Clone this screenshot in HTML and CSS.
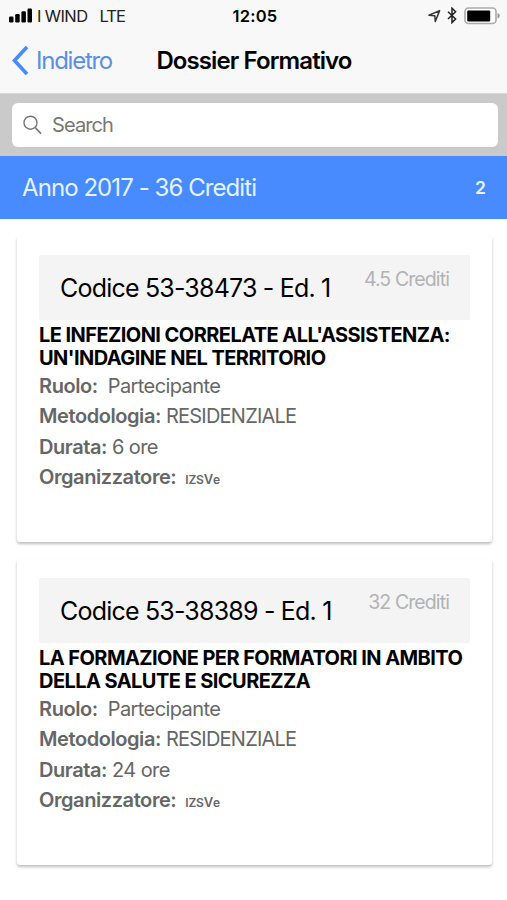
FILE: index.html
```html
<!DOCTYPE html>
<html lang="it">
<head>
  <meta charset="UTF-8" />
  <meta name="viewport" content="width=device-width, initial-scale=1" />
  <title>Dossier Formativo</title>
  <link rel="stylesheet" href="styles.css">
</head>
<body>

<header>
  <div class="status-bar">
    <div class="carrier">
      <svg class="signal" width="23" height="15" viewBox="0 0 23 15">
        <rect x="0" y="8.5" width="4.5" height="6" rx="1.2"/>
        <rect x="6.2" y="6" width="4.5" height="8.5" rx="1.2"/>
        <rect x="12.4" y="3.2" width="4.5" height="11.3" rx="1.2"/>
        <rect x="18.5" y="0.5" width="4.5" height="14" rx="1.2"/>
      </svg>
      <span class="operator">I WIND</span>
      <span class="network">LTE</span>
    </div>
    <span class="clock">12:05</span>
    <div class="indicators">
      <svg width="13" height="14" viewBox="0 0 13 14">
        <path d="M1 6.3L11.6 1.6L7.3 12.5L6.8 6.8Z" fill="none" stroke="#333" stroke-width="1.5" stroke-linejoin="round"/>
      </svg>
      <svg class="bluetooth" width="10" height="17" viewBox="0 0 10 17">
        <path d="M1 4.8L8.6 12L5 15.6V1.2L8.6 4.8L1 12" fill="none" stroke="#222" stroke-width="1.5"/>
      </svg>
      <svg class="battery" width="37" height="18" viewBox="0 0 37 18">
        <rect x="1" y="1" width="31" height="15.5" rx="3.5" fill="#fff" stroke="#aaa" stroke-width="1.6"/>
        <rect x="3.2" y="3.4" width="23" height="11" rx="1" fill="#000"/>
        <path d="M33.5 6V11.5Q35.8 10.7 35.8 8.7T33.5 6Z" fill="#999"/>
      </svg>
    </div>
  </div>
  <nav>
    <a href="#" class="back">
      <svg width="17" height="31" viewBox="0 0 17 31">
        <path d="M15 2L2.5 15.5L15 29" fill="none" stroke="#488aff" stroke-width="3.6"/>
      </svg>
      <span>Indietro</span>
    </a>
    <h1>Dossier Formativo</h1>
  </nav>
</header>

<div class="search">
  <div class="search-box">
    <svg width="19" height="20" viewBox="0 0 19 20">
      <circle cx="7.5" cy="7.7" r="6.5" fill="none" stroke="#777" stroke-width="1.4"/>
      <path d="M12.2 12.5L18 18.6" stroke="#777" stroke-width="1.7"/>
    </svg>
    <span>Search</span>
  </div>
</div>

<div class="year">
  <span class="year-label">Anno 2017 - 36 Crediti</span>
  <span class="year-count">2</span>
</div>

<main>
  <div class="card">
    <div class="card-head">
      <h2>Codice 53-38473 - Ed. 1</h2>
      <span class="credits">4.5 Crediti</span>
    </div>
    <h3>LE INFEZIONI CORRELATE ALL'ASSISTENZA:<br>UN'INDAGINE NEL TERRITORIO</h3>
    <p><strong>Ruolo:</strong>&nbsp; Partecipante</p>
    <p><strong>Metodologia:</strong> <span class="upper">RESIDENZIALE</span></p>
    <p><strong>Durata:</strong> 6 ore</p>
    <p><strong>Organizzatore:</strong> <span class="organizer"><small>IZS</small>V<small>e</small></span></p>
  </div>

  <div class="card">
    <div class="card-head">
      <h2>Codice 53-38389 - Ed. 1</h2>
      <span class="credits">32 Crediti</span>
    </div>
    <h3>LA FORMAZIONE PER FORMATORI IN AMBITO<br>DELLA SALUTE E SICUREZZA</h3>
    <p><strong>Ruolo:</strong>&nbsp; Partecipante</p>
    <p><strong>Metodologia:</strong> <span class="upper">RESIDENZIALE</span></p>
    <p><strong>Durata:</strong> 24 ore</p>
    <p><strong>Organizzatore:</strong> <span class="organizer"><small>IZS</small>V<small>e</small></span></p>
  </div>
</main>

</body>
</html>
```
FILE: styles.css
```css
* {
  box-sizing: border-box;
}

body {
  margin: 0;
  font-family: Inter, Roboto, sans-serif;
  background: #fff;
  color: #000;
}

svg {
  display: block;
  flex: none;
}

header {
  height: 94px;
  background: #f8f8f8;
  border-bottom: 1px solid #d8d8d8;
}

.status-bar {
  display: grid;
  grid-template-columns: 1fr auto 1fr;
  align-items: center;
  height: 31px;
  padding: 0 6px 0 9px;
}

.carrier {
  display: flex;
  align-items: center;
  font-size: 16.5px;
  letter-spacing: -0.6px;
  color: #222;
}

.operator {
  margin-left: 5px;
}

.network {
  margin-left: 12px;
  letter-spacing: -1px;
}

.clock {
  font-size: 16.5px;
  font-weight: 600;
  letter-spacing: 0.2px;
}

.indicators {
  display: flex;
  align-items: center;
  justify-content: flex-end;
}

.bluetooth {
  margin: 0 7px 0 6px;
}

nav {
  display: grid;
  grid-template-columns: 1fr auto 1fr;
  align-items: center;
  height: 58px;
  padding: 0 11px 0 12px;
}

.back {
  display: flex;
  align-items: center;
  gap: 7px;
  color: #5b8fe0;
  font-size: 24px;
  letter-spacing: -1.25px;
  text-decoration: none;
}

h1 {
  margin: 0;
  font-size: 24px;
  font-weight: 600;
  letter-spacing: -0.9px;
}

.search {
  height: 62px;
  padding: 9px 9px 0 12px;
  background: #cacaca;
}

.search-box {
  display: flex;
  align-items: center;
  gap: 10px;
  height: 44px;
  padding-left: 11px;
  border-radius: 6px;
  background: #fff;
  color: #777;
  font-size: 20px;
  letter-spacing: -0.9px;
}

.year {
  display: flex;
  align-items: center;
  justify-content: space-between;
  height: 63px;
  padding: 0 21px 0 22px;
  background: #488aff;
  color: #e2f4ff;
}

.year-label {
  font-size: 24px;
  letter-spacing: -0.93px;
}

.year-count {
  font-size: 17.5px;
  font-weight: 600;
}

main {
  padding: 17px 15px 0 17px;
}

.card {
  height: 306px;
  margin-bottom: 17px;
  padding: 19px 22px 0;
  border-radius: 3px;
  background: #fff;
  box-shadow: 0 2px 3px rgba(0, 0, 0, 0.26);
}

.card-head {
  display: flex;
  justify-content: space-between;
  height: 65px;
  padding: 0 21px;
  border-radius: 2px;
  background: #f4f4f4;
}

h2 {
  margin: 0;
  font-size: 25px;
  font-weight: 400;
  line-height: 66px;
  letter-spacing: -0.8px;
}

.credits {
  color: #b2b2b4;
  font-size: 19.5px;
  line-height: 49px;
  letter-spacing: -0.9px;
}

h3 {
  margin: 4px -10px 1px 0;
  font-size: 20px;
  font-weight: 700;
  line-height: 23px;
  letter-spacing: -0.56px;
  white-space: nowrap;
}

p {
  margin: 0;
  color: #666;
  font-size: 20px;
  line-height: 30.4px;
  letter-spacing: -0.6px;
}

strong {
  font-weight: 600;
  letter-spacing: -0.42px;
}

.upper {
  letter-spacing: -0.78px;
}

.organizer {
  margin-left: 4px;
  font-size: 13px;
  font-weight: 600;
  letter-spacing: -0.2px;
}

.organizer small {
  font-size: 12px;
}
```
